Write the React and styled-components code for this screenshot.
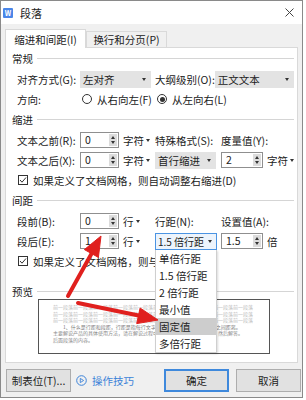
import React from "react";
import styled, { createGlobalStyle } from "styled-components";

const GlobalStyle = createGlobalStyle`
  body { margin: 0; background: #fff; }
  * { box-sizing: border-box; }
`;

const Page = styled.div`
  position: relative;
  width: 306px;
  height: 400px;
  overflow: hidden;
  background: #fff;
  font-family: "Noto Sans CJK SC", "Noto Sans", sans-serif;
  font-size: 10.5px;
  color: #222;
`;

const Dialog = styled.div`
  width: 303px;
  height: 398px;
  border: 1px solid #8a8a8a;
  background: #f0f0f0;
  display: flex;
  flex-direction: column;
`;

const TitleBar = styled.div`
  height: 23px;
  background: #fff;
  display: flex;
  align-items: center;
  padding: 0 8px 0 2px;
`;

const AppIcon = styled.span`
  width: 10px;
  height: 10px;
  border-radius: 1px;
  background: #4a86e8;
  color: #fff;
  font-size: 7px;
  font-weight: bold;
  line-height: 10px;
  text-align: center;
  margin-right: 7px;
`;

const Title = styled.span`
  font-size: 11px;
`;

const Close = styled.svg`
  margin-left: auto;
`;

const TabRow = styled.div`
  height: 23px;
  display: flex;
  align-items: flex-end;
  padding-left: 4px;
`;

const Tab = styled.div`
  width: 81px;
  height: ${p => (p.$active ? 19 : 16)}px;
  background: ${p => (p.$active ? "#fff" : "#f0f0f0")};
  border: 1px solid #d9d9d9;
  border-bottom: none;
  margin-bottom: ${p => (p.$active ? -1 : 0)}px;
  position: relative;
  z-index: ${p => (p.$active ? 1 : 0)};
  display: flex;
  align-items: center;
  justify-content: center;
`;

const Panel = styled.div`
  margin: 0 4px;
  height: 316px;
  border: 1px solid #d9d9d9;
  background: #fff;
`;

const SectionHead = styled.div`
  height: ${p => p.$h || 21}px;
  margin-top: ${p => p.$top || 0}px;
  display: flex;
  align-items: center;
  padding: 0 3px 0 6px;
  &::after {
    content: "";
    flex: 1;
    height: 1px;
    background: #d5d5d5;
    margin-left: 4px;
  }
`;

const Row = styled.div`
  display: grid;
  grid-template-columns: 63px 75px 66px 1fr;
  align-items: center;
  height: 20px;
  padding-left: 11px;
`;

const Cell = styled.div`
  display: flex;
  align-items: center;
  grid-column: ${p => p.$span || "auto"};
  padding-right: ${p => p.$pr || 0}px;
`;

const Caret = styled.span`
  width: 0;
  height: 0;
  border-left: 2.5px solid transparent;
  border-right: 2.5px solid transparent;
  border-top: 3px solid #333;
  margin-left: ${p => p.$gap ?? 2}px;
`;

const GraySelect = styled.div`
  width: ${p => (p.$w ? `${p.$w}px` : "auto")};
  flex: ${p => (p.$w ? "none" : 1)};
  height: 17px;
  background: #e3e3e3;
  display: flex;
  align-items: center;
  justify-content: space-between;
  padding: 0 5px 0 3px;
`;

const DropWrap = styled.div`
  position: relative;
`;

const FocusSelect = styled.div`
  width: 62px;
  height: 17px;
  border: 1px solid #4b94e3;
  background: #edf4fc;
  display: flex;
  align-items: center;
  justify-content: space-between;
  padding: 0 4px 0 2px;
  font-size: 10px;
`;

const DropList = styled.div`
  position: absolute;
  top: 100%;
  left: 0;
  width: 62px;
  z-index: 5;
  background: #fff;
  border: 1px solid #cfcfcf;
  border-top: none;
  box-shadow: 1px 1px 2px rgba(0, 0, 0, 0.15);
`;

const DropItem = styled.div`
  height: 17px;
  line-height: 17px;
  padding-left: 3px;
  font-size: 10.5px;
  background: ${p => (p.$hot ? "#cdcdcd" : "transparent")};
`;

const SpinBox = styled.div`
  display: flex;
  width: ${p => p.$w}px;
  height: 16px;
  border: 1px solid #8f8f8f;
  background: #fff;
`;

const SpinValue = styled.span`
  flex: 1;
  padding-left: 4px;
  line-height: 14px;
`;

const SpinButtons = styled.div`
  width: 8px;
  margin: 1px;
  background: #dcdcdc;
  display: flex;
  flex-direction: column;
  align-items: center;
  justify-content: center;
  gap: 2px;
`;

const SpinArrow = styled.span`
  width: 0;
  height: 0;
  border-left: 2.5px solid transparent;
  border-right: 2.5px solid transparent;
  ${p => (p.$up ? "border-bottom: 3px solid #333;" : "border-top: 3px solid #333;")}
`;

const Unit = styled.span`
  display: inline-flex;
  align-items: center;
  margin-left: 4px;
`;

const Radio = styled.span`
  width: 10px;
  height: 10px;
  border: 1px solid #333;
  border-radius: 50%;
  margin: 0 5px 0 2px;
  display: flex;
  align-items: center;
  justify-content: center;
  &::after {
    content: "";
    width: 5px;
    height: 5px;
    border-radius: 50%;
    background: ${p => (p.$on ? "#333" : "transparent")};
  }
`;

const CheckRow = styled.div`
  height: 20px;
  display: flex;
  align-items: center;
  padding-left: 12px;
  gap: 5px;
  white-space: nowrap;
`;

const CheckBox = styled.span`
  width: 10px;
  height: 10px;
  border: 1px solid #333;
  display: flex;
  align-items: center;
  justify-content: center;
`;

const PreviewBox = styled.div`
  margin-left: 32px;
  width: 232px;
  height: 55px;
  border: 1px solid #555;
  padding: 4px 6px 0 14px;
  overflow: hidden;
`;

const PreviewLine = styled.div`
  font-size: 5px;
  line-height: 6.5px;
  height: 6.5px;
  color: ${p => p.$c || "#bbb"};
  padding-left: ${p => p.$indent || 0}px;
  white-space: nowrap;
`;

const Footer = styled.div`
  display: flex;
  align-items: center;
  margin-top: 6px;
  padding: 0 1px 0 5px;
`;

const Button = styled.button`
  width: 65px;
  height: 23px;
  font-family: inherit;
  font-size: 10.5px;
  color: #222;
  background: #e1e1e1;
  border: ${p => (p.$primary ? "2px solid #3f89dc" : "1px solid #adadad")};
  margin-left: ${p => p.$ml || "0"};
  padding: 0;
`;

const HelpLink = styled.span`
  display: flex;
  align-items: center;
  gap: 5px;
  margin-left: 5px;
  color: #3d83d8;
`;

const Overlay = styled.svg`
  position: absolute;
  left: 0;
  top: 0;
  pointer-events: none;
  z-index: 10;
`;

const Spinner = ({ w, value }) => (
  <SpinBox $w={w}>
    <SpinValue>{value}</SpinValue>
    <SpinButtons>
      <SpinArrow $up />
      <SpinArrow />
    </SpinButtons>
  </SpinBox>
);

const CheckMark = () => (
  <CheckBox>
    <svg width="8" height="8" viewBox="0 0 8 8">
      <path d="M1 4 L3 6.2 L7 1.5" fill="none" stroke="#333" strokeWidth="1" />
    </svg>
  </CheckBox>
);

const prevDot = "前一段落".repeat(10);
const lineOptions = ["单倍行距", "1.5 倍行距", "2 倍行距", "最小值", "固定值", "多倍行距"];

export default function App() {
  return (
    <Page>
      <GlobalStyle />
      <Dialog>
        <TitleBar>
          <AppIcon>W</AppIcon>
          <Title>段落</Title>
          <Close width="9" height="9" viewBox="0 0 9 9">
            <path d="M0.5 0.5 L8.5 8.5 M8.5 0.5 L0.5 8.5" stroke="#444" strokeWidth="1" />
          </Close>
        </TitleBar>
        <TabRow>
          <Tab $active>缩进和间距(I)</Tab>
          <Tab>换行和分页(P)</Tab>
        </TabRow>
        <Panel>
          <SectionHead>常规</SectionHead>
          <Row>
            <span>对齐方式(G):</span>
            <Cell>
              <GraySelect $w={71}>左对齐<Caret /></GraySelect>
            </Cell>
            <Cell $span="3 / 5" $pr={3}>
              <span>大纲级别(O):</span>
              <GraySelect>正文文本<Caret /></GraySelect>
            </Cell>
          </Row>
          <Row>
            <span>方向:</span>
            <Cell><Radio />从右向左(F)</Cell>
            <Cell $span="3 / 5"><Radio $on />从左向右(L)</Cell>
          </Row>

          <SectionHead>缩进</SectionHead>
          <Row>
            <span>文本之前(R):</span>
            <Cell><Spinner w={39} value="0" /><Unit>字符<Caret /></Unit></Cell>
            <span>特殊格式(S):</span>
            <span>度量值(Y):</span>
          </Row>
          <Row>
            <span>文本之后(X):</span>
            <Cell><Spinner w={39} value="0" /><Unit>字符<Caret /></Unit></Cell>
            <Cell><GraySelect $w={61}>首行缩进<Caret /></GraySelect></Cell>
            <Cell><Spinner w={42} value="2" /><Unit>字符<Caret /></Unit></Cell>
          </Row>
          <CheckRow>
            <CheckMark />
            如果定义了文档网格，则自动调整右缩进(D)
          </CheckRow>

          <SectionHead>间距</SectionHead>
          <Row>
            <span>段前(B):</span>
            <Cell><Spinner w={39} value="0" /><Unit>行<Caret /></Unit></Cell>
            <span>行距(N):</span>
            <span>设置值(A):</span>
          </Row>
          <Row>
            <span>段后(E):</span>
            <Cell><Spinner w={39} value="1" /><Unit>行<Caret /></Unit></Cell>
            <Cell>
              <DropWrap>
                <FocusSelect>1.5 倍行距<Caret /></FocusSelect>
                <DropList>
                  {lineOptions.map(o => (
                    <DropItem key={o} $hot={o === "固定值"}>{o}</DropItem>
                  ))}
                </DropList>
              </DropWrap>
            </Cell>
            <Cell><Spinner w={42} value="1.5" /><Unit>倍</Unit></Cell>
          </Row>
          <CheckRow>
            <CheckMark />
            如果定义了文档网格，则与网格对齐(W)
          </CheckRow>

          <SectionHead $top={12} $h={16}>预览</SectionHead>
          <PreviewBox>
            <PreviewLine>{prevDot}</PreviewLine>
            <PreviewLine>{prevDot}</PreviewLine>
            <PreviewLine>{prevDot}</PreviewLine>
            <PreviewLine $c="#777" $indent={10}>1、什么是行距和段距，行距是指每行文字之间的距离，段距是指段落之间距离。</PreviewLine>
            <PreviewLine $c="#888">主要解说产品的具体使用方法，请在解说过程中逐步介绍产品的各项功能，然后解答。</PreviewLine>
            <PreviewLine $c="#888">后面段落的内容。</PreviewLine>
          </PreviewBox>
        </Panel>
        <Footer>
          <Button>制表位(T)...</Button>
          <HelpLink>
            <svg width="11" height="11" viewBox="0 0 11 11">
              <circle cx="5.5" cy="5.5" r="4.8" fill="none" stroke="#3d83d8" strokeWidth="1" />
              <path d="M4.3 3.4 L7.6 5.5 L4.3 7.6 Z" fill="none" stroke="#3d83d8" strokeWidth="0.9" />
            </svg>
            操作技巧
          </HelpLink>
          <Button $primary $ml="auto">确定</Button>
          <Button $ml="7px">取消</Button>
        </Footer>
      </Dialog>
      <Overlay width="306" height="400" viewBox="0 0 306 400">
        <g fill="#e0201e" stroke="#e0201e" strokeLinejoin="round">
          <line x1="68" y1="296" x2="93" y2="251" strokeWidth="4" strokeLinecap="round" />
          <polygon points="101,236 98.4,257.4 84.4,249.6" strokeWidth="1" />
          <line x1="78" y1="303" x2="141" y2="316" strokeWidth="4" strokeLinecap="round" />
          <polygon points="158,320 136.7,323.6 140.1,308" strokeWidth="1" />
        </g>
      </Overlay>
    </Page>
  );
}
